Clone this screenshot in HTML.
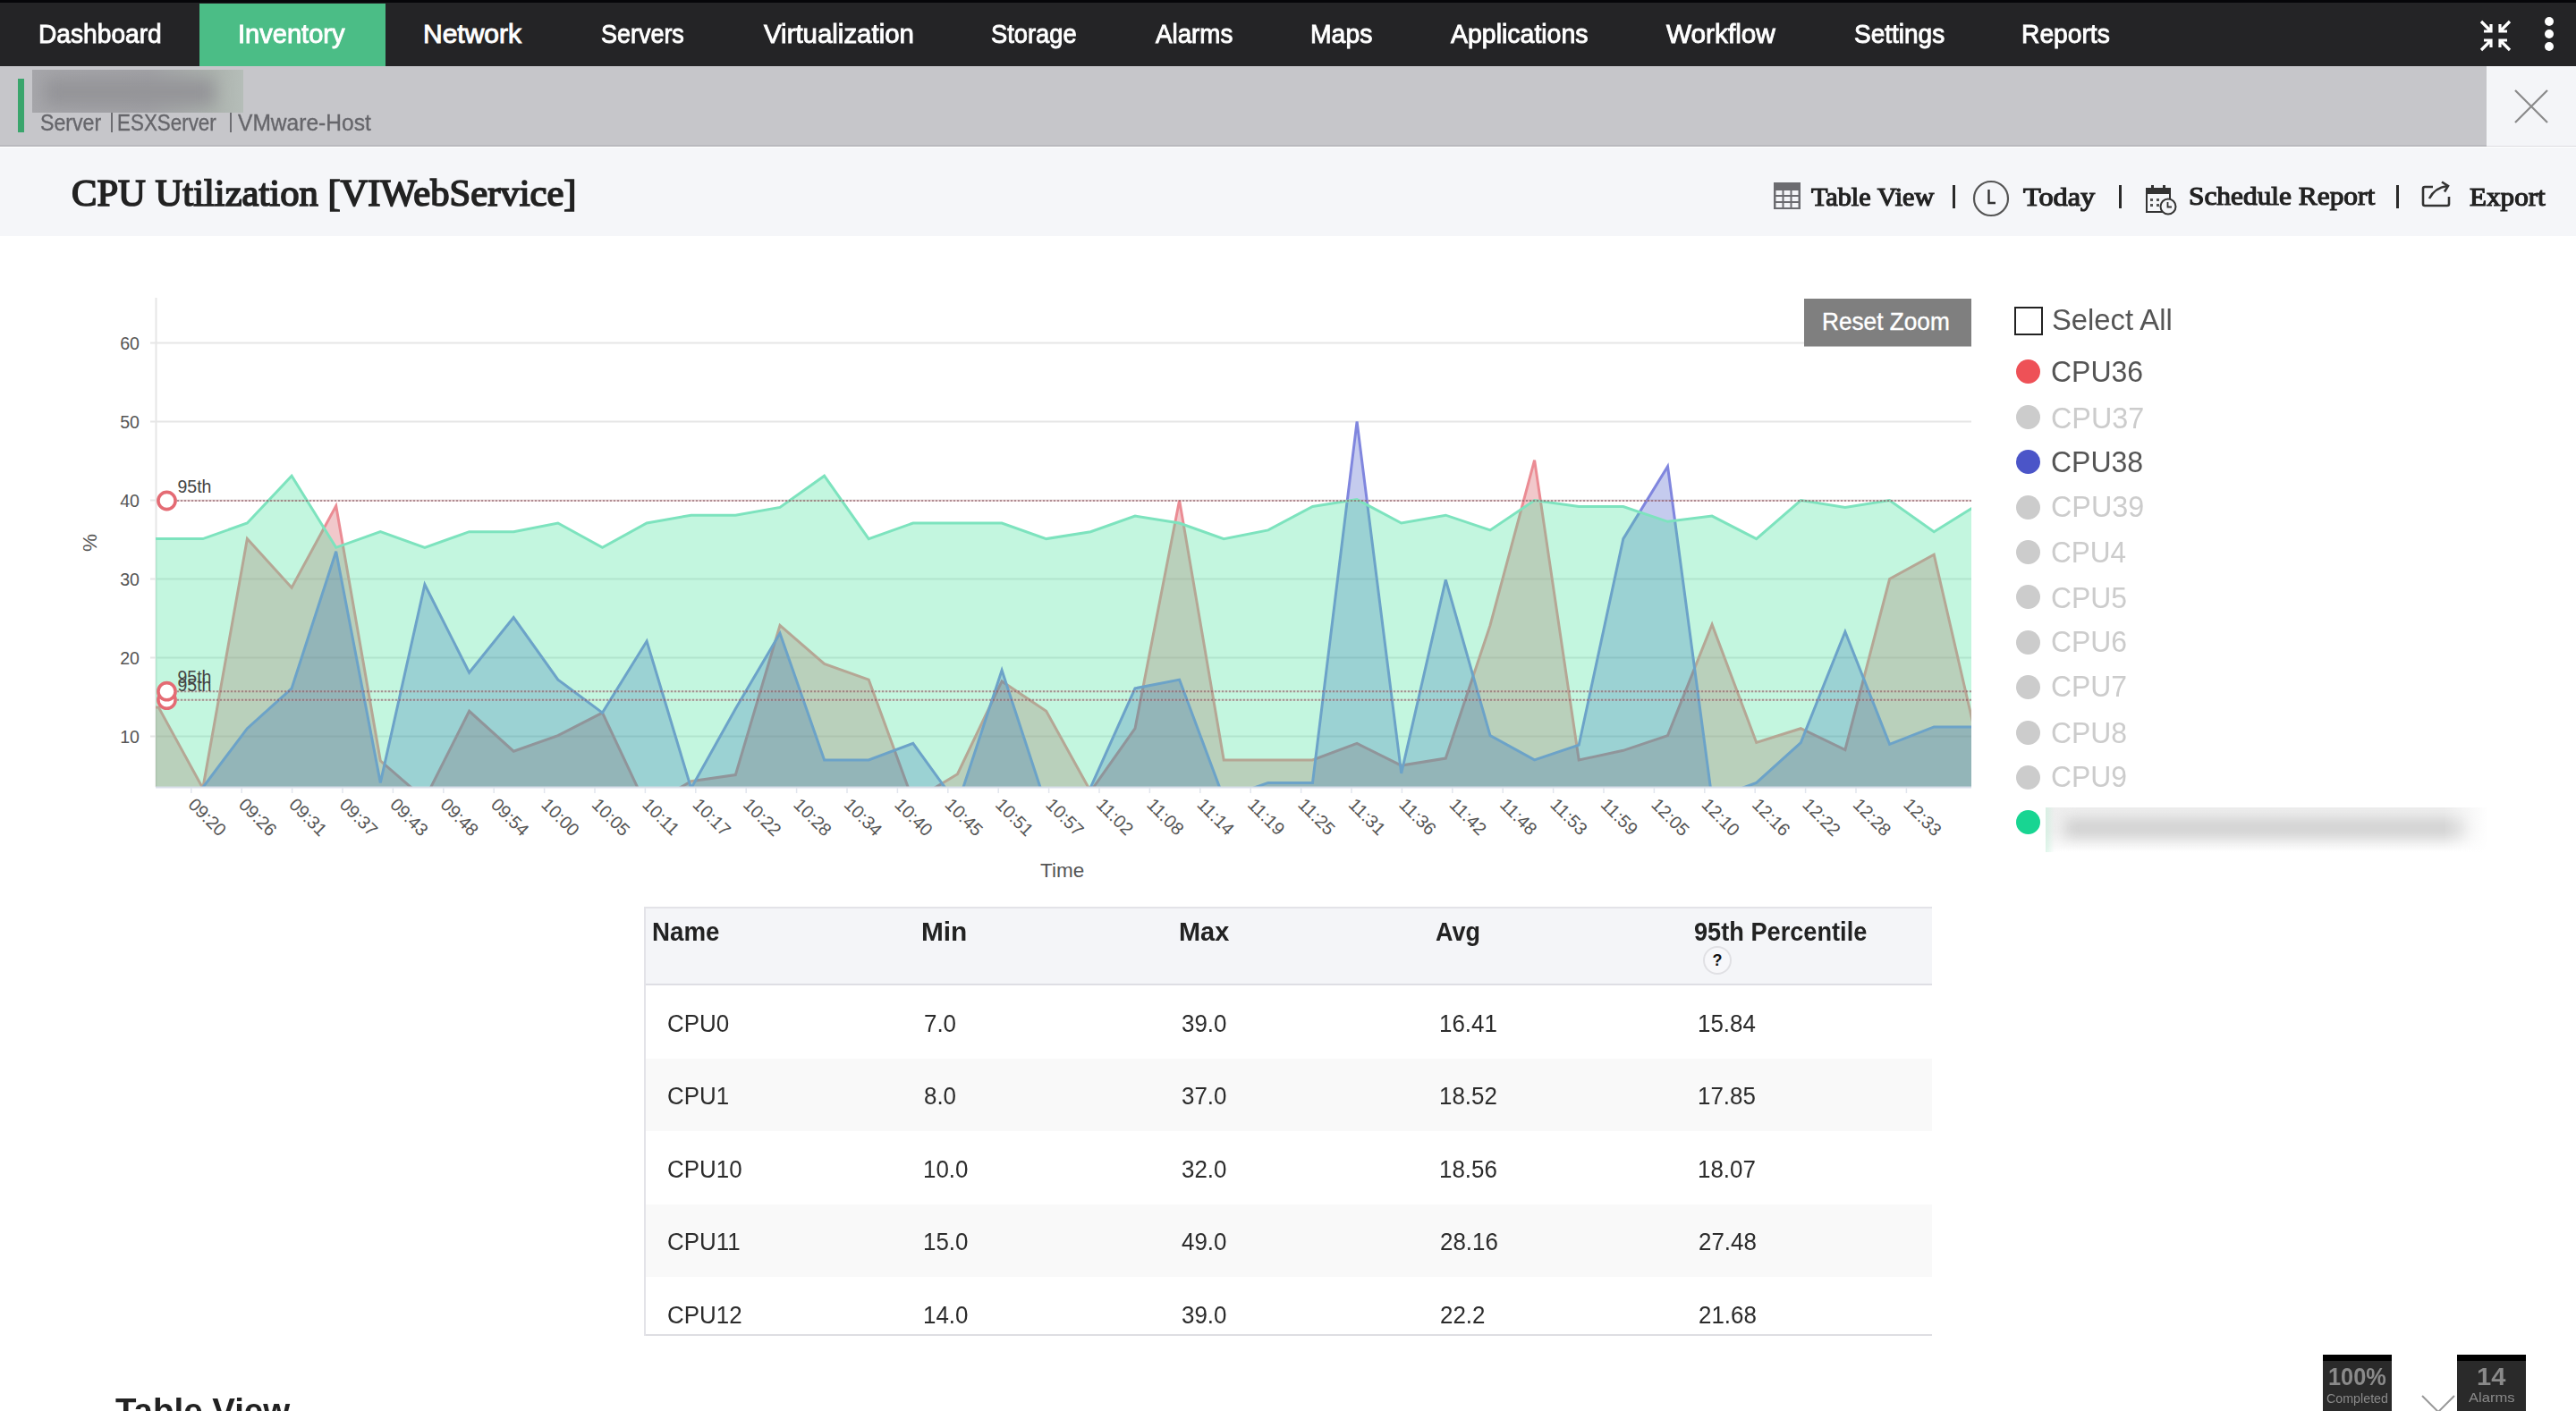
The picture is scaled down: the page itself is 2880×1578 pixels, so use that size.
<!DOCTYPE html>
<html><head><meta charset="utf-8">
<style>
html,body{margin:0;padding:0;}
body{width:2880px;height:1578px;overflow:hidden;position:relative;background:#fff;font-family:"Liberation Sans",sans-serif;}
div{box-sizing:border-box}
</style></head><body>
<div style="position:absolute;left:0;top:0;width:2880px;height:74px;background:#242426"></div>
<div style="position:absolute;left:0;top:0;width:2880px;height:3px;background:#060609"></div>
<div style="position:absolute;left:223px;top:4px;width:208px;height:70px;background:#4bbd86"></div>
<svg style="position:absolute;left:2770px;top:20px" width="40" height="40" viewBox="0 0 40 40">
<g stroke="#fff" stroke-width="3.2" fill="none">
<path d="M4 4 L15 15 M15 7 V15 H7"/><path d="M36 4 L25 15 M25 7 V15 H33"/>
<path d="M4 36 L15 25 M7 25 H15 V33"/><path d="M36 36 L25 25 M33 25 H25 V33"/>
</g></svg>
<div style="position:absolute;left:2845px;top:19px;width:10px;height:10px;border-radius:50%;background:#fff"></div>
<div style="position:absolute;left:2845px;top:33px;width:10px;height:10px;border-radius:50%;background:#fff"></div>
<div style="position:absolute;left:2845px;top:46.5px;width:10px;height:10px;border-radius:50%;background:#fff"></div>
<div style="position:absolute;left:0;top:74px;width:2780px;height:89px;background:#c6c6ca"></div>
<div style="position:absolute;left:2780px;top:74px;width:100px;height:89px;background:#f4f5f8"></div>
<div style="position:absolute;left:0;top:162px;width:2780px;height:2px;background:#b9b9be"></div><div style="position:absolute;left:2780px;top:163px;width:100px;height:1px;background:#dcdce0"></div>
<div style="position:absolute;left:20px;top:88px;width:7px;height:60px;background:#3aa56c"></div>
<div style="position:absolute;left:36px;top:78px;width:236px;height:48px;background:linear-gradient(90deg,#a6a6aa 0%,#a2a2a6 55%,#acb3ae 85%,#b5bdb8 100%);overflow:hidden">
<div style="position:absolute;left:14px;top:10px;width:190px;height:30px;background:#949498;filter:blur(9px)"></div></div>
<div style="position:absolute;left:124px;top:126px;width:2px;height:22px;background:#6d6d72"></div>
<div style="position:absolute;left:257px;top:126px;width:2px;height:22px;background:#6d6d72"></div>
<svg style="position:absolute;left:2810px;top:99px" width="40" height="40"><path d="M2 2 L38 38 M38 2 L2 38" stroke="#8a8a8a" stroke-width="2.2"/></svg>
<div style="position:absolute;left:0;top:165px;width:2880px;height:99px;background:#f5f6f9"></div>
<svg style="position:absolute;left:1983px;top:204px" width="31" height="30" viewBox="0 0 31 30">
<rect x="0" y="0" width="30" height="30" fill="#6b6b70"/><g fill="#f4f5f8">
<rect x="2.5" y="9" width="7" height="5"/><rect x="11.5" y="9" width="7" height="5"/><rect x="20.5" y="9" width="7" height="5"/>
<rect x="2.5" y="16" width="7" height="5"/><rect x="11.5" y="16" width="7" height="5"/><rect x="20.5" y="16" width="7" height="5"/>
<rect x="2.5" y="23" width="7" height="5"/><rect x="11.5" y="23" width="7" height="5"/><rect x="20.5" y="23" width="7" height="5"/></g></svg>
<div style="position:absolute;left:2183px;top:207px;width:3px;height:26px;background:#2a2a2a"></div>
<svg style="position:absolute;left:2205px;top:201px" width="42" height="42"><circle cx="21" cy="21" r="19" fill="none" stroke="#555" stroke-width="2.2"/><path d="M18.5 11 V26 H26" fill="none" stroke="#333" stroke-width="2.4"/></svg>
<div style="position:absolute;left:2369px;top:207px;width:3px;height:26px;background:#2a2a2a"></div>
<svg style="position:absolute;left:2399px;top:205px" width="36" height="36" viewBox="0 0 36 36">
<rect x="1" y="6" width="26" height="26" fill="none" stroke="#333" stroke-width="2"/><rect x="1" y="6" width="26" height="6" fill="#333"/>
<rect x="6" y="2" width="3" height="7" fill="#333"/><rect x="19" y="2" width="3" height="7" fill="#333"/>
<rect x="5" y="17" width="3" height="3" fill="#555"/><rect x="5" y="23" width="3" height="3" fill="#555"/><rect x="12" y="17" width="3" height="3" fill="#555"/><rect x="12" y="23" width="3" height="3" fill="#555"/>
<circle cx="25" cy="26" r="8.5" fill="#f4f5f8" stroke="#333" stroke-width="2"/><path d="M24.5 21 V26.5 H29" fill="none" stroke="#333" stroke-width="1.8"/></svg>
<div style="position:absolute;left:2679px;top:207px;width:3px;height:26px;background:#2a2a2a"></div>
<svg style="position:absolute;left:2706px;top:202px" width="36" height="32" viewBox="0 0 36 32">
<path d="M14 7 H5 Q3 7 3 9 V26 Q3 28 5 28 H30 Q32 28 32 26 V18" fill="none" stroke="#333" stroke-width="2.6"/>
<path d="M10 20 Q16 8 30 6" fill="none" stroke="#333" stroke-width="2.6"/><path d="M24 1.5 L31 6 L27 12.5" fill="none" stroke="#333" stroke-width="2.6"/></svg>
<svg width="2880" height="1000" style="position:absolute;left:0;top:0;font-family:'Liberation Sans',sans-serif">
<defs><clipPath id="pc"><rect x="174" y="300" width="2030" height="580"/></clipPath></defs>
<line x1="168" y1="823.5" x2="2204" y2="823.5" stroke="#e6e6e6" stroke-width="2"/>
<text x="156" y="830.5" text-anchor="end" font-size="19.6" fill="#555">10</text>
<line x1="168" y1="735.5" x2="2204" y2="735.5" stroke="#e6e6e6" stroke-width="2"/>
<text x="156" y="742.5" text-anchor="end" font-size="19.6" fill="#555">20</text>
<line x1="168" y1="647.5" x2="2204" y2="647.5" stroke="#e6e6e6" stroke-width="2"/>
<text x="156" y="654.5" text-anchor="end" font-size="19.6" fill="#555">30</text>
<line x1="168" y1="559.5" x2="2204" y2="559.5" stroke="#e6e6e6" stroke-width="2"/>
<text x="156" y="566.5" text-anchor="end" font-size="19.6" fill="#555">40</text>
<line x1="168" y1="471.5" x2="2204" y2="471.5" stroke="#e6e6e6" stroke-width="2"/>
<text x="156" y="478.5" text-anchor="end" font-size="19.6" fill="#555">50</text>
<line x1="168" y1="383.5" x2="2017" y2="383.5" stroke="#e6e6e6" stroke-width="2"/>
<text x="156" y="390.5" text-anchor="end" font-size="19.6" fill="#555">60</text>
<line x1="174.5" y1="333" x2="174.5" y2="880" stroke="#e6e6e6" stroke-width="2"/>
<g clip-path="url(#pc)">
<path d="M127.6 911.5 L127.6 790.9 L177.2 790.9 L226.8 881.6 L276.4 602.6 L326.1 657.2 L375.7 565.7 L425.3 850.8 L474.9 893.9 L524.6 795.3 L574.2 840.2 L623.8 822.6 L673.5 797.1 L723.1 902.7 L772.7 873.7 L822.3 866.6 L872.0 699.4 L921.6 742.5 L971.2 760.1 L1020.8 895.7 L1070.5 865.7 L1120.1 761.9 L1169.7 795.3 L1219.3 885.1 L1269.0 814.7 L1318.6 559.5 L1368.2 849.9 L1417.8 849.9 L1467.5 849.9 L1517.1 831.4 L1566.7 856.1 L1616.3 848.1 L1666.0 699.4 L1715.6 514.6 L1765.2 849.9 L1814.8 839.3 L1864.5 822.6 L1914.1 698.5 L1963.7 830.5 L2013.3 814.7 L2062.9 838.5 L2112.6 647.5 L2162.2 620.2 L2211.8 834.9 L2211.8 911.5 Z" fill="rgba(214,88,97,0.33)"/>
<path d="M127.6 790.9 L177.2 790.9 L226.8 881.6 L276.4 602.6 L326.1 657.2 L375.7 565.7 L425.3 850.8 L474.9 893.9 L524.6 795.3 L574.2 840.2 L623.8 822.6 L673.5 797.1 L723.1 902.7 L772.7 873.7 L822.3 866.6 L872.0 699.4 L921.6 742.5 L971.2 760.1 L1020.8 895.7 L1070.5 865.7 L1120.1 761.9 L1169.7 795.3 L1219.3 885.1 L1269.0 814.7 L1318.6 559.5 L1368.2 849.9 L1417.8 849.9 L1467.5 849.9 L1517.1 831.4 L1566.7 856.1 L1616.3 848.1 L1666.0 699.4 L1715.6 514.6 L1765.2 849.9 L1814.8 839.3 L1864.5 822.6 L1914.1 698.5 L1963.7 830.5 L2013.3 814.7 L2062.9 838.5 L2112.6 647.5 L2162.2 620.2 L2211.8 834.9" fill="none" stroke="#eb8c94" stroke-width="3"/>
<path d="M127.6 911.5 L127.6 902.7 L177.2 902.7 L226.8 880.7 L276.4 814.7 L326.1 769.8 L375.7 616.7 L425.3 875.4 L474.9 653.7 L524.6 752.2 L574.2 690.6 L623.8 760.1 L673.5 797.1 L723.1 717.0 L772.7 881.6 L822.3 792.7 L872.0 708.2 L921.6 849.9 L971.2 849.9 L1020.8 831.4 L1070.5 900.1 L1120.1 749.6 L1169.7 900.9 L1219.3 880.7 L1269.0 769.8 L1318.6 760.1 L1368.2 893.0 L1417.8 875.4 L1467.5 875.4 L1517.1 471.5 L1566.7 864.9 L1616.3 648.4 L1666.0 822.6 L1715.6 849.9 L1765.2 833.2 L1814.8 602.6 L1864.5 521.7 L1914.1 893.9 L1963.7 875.4 L2013.3 830.5 L2062.9 706.5 L2112.6 832.3 L2162.2 812.9 L2211.8 812.9 L2211.8 911.5 Z" fill="rgba(0,28,180,0.228)"/>
<path d="M127.6 902.7 L177.2 902.7 L226.8 880.7 L276.4 814.7 L326.1 769.8 L375.7 616.7 L425.3 875.4 L474.9 653.7 L524.6 752.2 L574.2 690.6 L623.8 760.1 L673.5 797.1 L723.1 717.0 L772.7 881.6 L822.3 792.7 L872.0 708.2 L921.6 849.9 L971.2 849.9 L1020.8 831.4 L1070.5 900.1 L1120.1 749.6 L1169.7 900.9 L1219.3 880.7 L1269.0 769.8 L1318.6 760.1 L1368.2 893.0 L1417.8 875.4 L1467.5 875.4 L1517.1 471.5 L1566.7 864.9 L1616.3 648.4 L1666.0 822.6 L1715.6 849.9 L1765.2 833.2 L1814.8 602.6 L1864.5 521.7 L1914.1 893.9 L1963.7 875.4 L2013.3 830.5 L2062.9 706.5 L2112.6 832.3 L2162.2 812.9 L2211.8 812.9" fill="none" stroke="#8086de" stroke-width="3"/>
<path d="M127.6 911.5 L127.6 602.6 L177.2 602.6 L226.8 602.6 L276.4 585.0 L326.1 532.2 L375.7 612.3 L425.3 594.7 L474.9 612.3 L524.6 594.7 L574.2 594.7 L623.8 585.0 L673.5 612.3 L723.1 585.0 L772.7 576.2 L822.3 576.2 L872.0 567.4 L921.6 532.2 L971.2 602.6 L1020.8 585.0 L1070.5 585.0 L1120.1 585.0 L1169.7 602.6 L1219.3 594.7 L1269.0 577.1 L1318.6 585.0 L1368.2 602.6 L1417.8 592.9 L1467.5 566.5 L1517.1 558.6 L1566.7 585.0 L1616.3 576.2 L1666.0 592.9 L1715.6 559.5 L1765.2 566.5 L1814.8 566.5 L1864.5 583.3 L1914.1 577.1 L1963.7 602.6 L2013.3 559.5 L2062.9 567.4 L2112.6 559.5 L2162.2 594.7 L2211.8 563.9 L2211.8 911.5 Z" fill="rgba(63,226,154,0.315)"/>
<path d="M127.6 602.6 L177.2 602.6 L226.8 602.6 L276.4 585.0 L326.1 532.2 L375.7 612.3 L425.3 594.7 L474.9 612.3 L524.6 594.7 L574.2 594.7 L623.8 585.0 L673.5 612.3 L723.1 585.0 L772.7 576.2 L822.3 576.2 L872.0 567.4 L921.6 532.2 L971.2 602.6 L1020.8 585.0 L1070.5 585.0 L1120.1 585.0 L1169.7 602.6 L1219.3 594.7 L1269.0 577.1 L1318.6 585.0 L1368.2 602.6 L1417.8 592.9 L1467.5 566.5 L1517.1 558.6 L1566.7 585.0 L1616.3 576.2 L1666.0 592.9 L1715.6 559.5 L1765.2 566.5 L1814.8 566.5 L1864.5 583.3 L1914.1 577.1 L1963.7 602.6 L2013.3 559.5 L2062.9 567.4 L2112.6 559.5 L2162.2 594.7 L2211.8 563.9" fill="none" stroke="#7de3be" stroke-width="3"/>
</g>
<line x1="198" y1="560.0" x2="2204" y2="560.0" stroke="rgba(235,130,140,0.25)" stroke-width="2"/>
<line x1="198" y1="560.0" x2="2204" y2="560.0" stroke="rgba(115,75,85,0.5)" stroke-width="2" stroke-dasharray="2 2"/>
<line x1="198" y1="773.2" x2="2204" y2="773.2" stroke="rgba(235,130,140,0.25)" stroke-width="2"/>
<line x1="198" y1="773.2" x2="2204" y2="773.2" stroke="rgba(115,75,85,0.5)" stroke-width="2" stroke-dasharray="2 2"/>
<line x1="198" y1="782.7" x2="2204" y2="782.7" stroke="rgba(235,130,140,0.25)" stroke-width="2"/>
<line x1="198" y1="782.7" x2="2204" y2="782.7" stroke="rgba(115,75,85,0.5)" stroke-width="2" stroke-dasharray="2 2"/>
<circle cx="186.5" cy="782.7" r="9.6" fill="#fff" stroke="#e46b74" stroke-width="3.6"/>
<text x="198.5" y="773.4" font-size="19.5" fill="#444">95th</text>
<circle cx="186.5" cy="773.2" r="9.6" fill="#fff" stroke="#e46b74" stroke-width="3.6"/>
<text x="198.5" y="763.9" font-size="19.5" fill="#444">95th</text>
<circle cx="186.5" cy="560.0" r="9.6" fill="#fff" stroke="#e46b74" stroke-width="3.6"/>
<text x="198.5" y="550.7" font-size="19.5" fill="#444">95th</text>
<line x1="174" y1="880.5" x2="2204" y2="880.5" stroke="#d8dee9" stroke-width="2"/>
<line x1="213.8" y1="881" x2="213.8" y2="887" stroke="#e2e6ee" stroke-width="1.5"/>
<text transform="translate(209.3,901) rotate(45)" font-size="20" fill="#555">09:20</text>
<line x1="270.2" y1="881" x2="270.2" y2="887" stroke="#e2e6ee" stroke-width="1.5"/>
<text transform="translate(265.7,901) rotate(45)" font-size="20" fill="#555">09:26</text>
<line x1="326.6" y1="881" x2="326.6" y2="887" stroke="#e2e6ee" stroke-width="1.5"/>
<text transform="translate(322.1,901) rotate(45)" font-size="20" fill="#555">09:31</text>
<line x1="383.0" y1="881" x2="383.0" y2="887" stroke="#e2e6ee" stroke-width="1.5"/>
<text transform="translate(378.5,901) rotate(45)" font-size="20" fill="#555">09:37</text>
<line x1="439.4" y1="881" x2="439.4" y2="887" stroke="#e2e6ee" stroke-width="1.5"/>
<text transform="translate(434.9,901) rotate(45)" font-size="20" fill="#555">09:43</text>
<line x1="495.8" y1="881" x2="495.8" y2="887" stroke="#e2e6ee" stroke-width="1.5"/>
<text transform="translate(491.3,901) rotate(45)" font-size="20" fill="#555">09:48</text>
<line x1="552.2" y1="881" x2="552.2" y2="887" stroke="#e2e6ee" stroke-width="1.5"/>
<text transform="translate(547.7,901) rotate(45)" font-size="20" fill="#555">09:54</text>
<line x1="608.6" y1="881" x2="608.6" y2="887" stroke="#e2e6ee" stroke-width="1.5"/>
<text transform="translate(604.1,901) rotate(45)" font-size="20" fill="#555">10:00</text>
<line x1="665.0" y1="881" x2="665.0" y2="887" stroke="#e2e6ee" stroke-width="1.5"/>
<text transform="translate(660.5,901) rotate(45)" font-size="20" fill="#555">10:05</text>
<line x1="721.4" y1="881" x2="721.4" y2="887" stroke="#e2e6ee" stroke-width="1.5"/>
<text transform="translate(716.9,901) rotate(45)" font-size="20" fill="#555">10:11</text>
<line x1="777.8" y1="881" x2="777.8" y2="887" stroke="#e2e6ee" stroke-width="1.5"/>
<text transform="translate(773.3,901) rotate(45)" font-size="20" fill="#555">10:17</text>
<line x1="834.2" y1="881" x2="834.2" y2="887" stroke="#e2e6ee" stroke-width="1.5"/>
<text transform="translate(829.7,901) rotate(45)" font-size="20" fill="#555">10:22</text>
<line x1="890.6" y1="881" x2="890.6" y2="887" stroke="#e2e6ee" stroke-width="1.5"/>
<text transform="translate(886.1,901) rotate(45)" font-size="20" fill="#555">10:28</text>
<line x1="947.0" y1="881" x2="947.0" y2="887" stroke="#e2e6ee" stroke-width="1.5"/>
<text transform="translate(942.5,901) rotate(45)" font-size="20" fill="#555">10:34</text>
<line x1="1003.4" y1="881" x2="1003.4" y2="887" stroke="#e2e6ee" stroke-width="1.5"/>
<text transform="translate(998.9,901) rotate(45)" font-size="20" fill="#555">10:40</text>
<line x1="1059.8" y1="881" x2="1059.8" y2="887" stroke="#e2e6ee" stroke-width="1.5"/>
<text transform="translate(1055.3,901) rotate(45)" font-size="20" fill="#555">10:45</text>
<line x1="1116.2" y1="881" x2="1116.2" y2="887" stroke="#e2e6ee" stroke-width="1.5"/>
<text transform="translate(1111.7,901) rotate(45)" font-size="20" fill="#555">10:51</text>
<line x1="1172.6" y1="881" x2="1172.6" y2="887" stroke="#e2e6ee" stroke-width="1.5"/>
<text transform="translate(1168.1,901) rotate(45)" font-size="20" fill="#555">10:57</text>
<line x1="1229.0" y1="881" x2="1229.0" y2="887" stroke="#e2e6ee" stroke-width="1.5"/>
<text transform="translate(1224.5,901) rotate(45)" font-size="20" fill="#555">11:02</text>
<line x1="1285.4" y1="881" x2="1285.4" y2="887" stroke="#e2e6ee" stroke-width="1.5"/>
<text transform="translate(1280.9,901) rotate(45)" font-size="20" fill="#555">11:08</text>
<line x1="1341.8" y1="881" x2="1341.8" y2="887" stroke="#e2e6ee" stroke-width="1.5"/>
<text transform="translate(1337.3,901) rotate(45)" font-size="20" fill="#555">11:14</text>
<line x1="1398.2" y1="881" x2="1398.2" y2="887" stroke="#e2e6ee" stroke-width="1.5"/>
<text transform="translate(1393.7,901) rotate(45)" font-size="20" fill="#555">11:19</text>
<line x1="1454.6" y1="881" x2="1454.6" y2="887" stroke="#e2e6ee" stroke-width="1.5"/>
<text transform="translate(1450.1,901) rotate(45)" font-size="20" fill="#555">11:25</text>
<line x1="1511.0" y1="881" x2="1511.0" y2="887" stroke="#e2e6ee" stroke-width="1.5"/>
<text transform="translate(1506.5,901) rotate(45)" font-size="20" fill="#555">11:31</text>
<line x1="1567.4" y1="881" x2="1567.4" y2="887" stroke="#e2e6ee" stroke-width="1.5"/>
<text transform="translate(1562.9,901) rotate(45)" font-size="20" fill="#555">11:36</text>
<line x1="1623.8" y1="881" x2="1623.8" y2="887" stroke="#e2e6ee" stroke-width="1.5"/>
<text transform="translate(1619.3,901) rotate(45)" font-size="20" fill="#555">11:42</text>
<line x1="1680.2" y1="881" x2="1680.2" y2="887" stroke="#e2e6ee" stroke-width="1.5"/>
<text transform="translate(1675.7,901) rotate(45)" font-size="20" fill="#555">11:48</text>
<line x1="1736.6" y1="881" x2="1736.6" y2="887" stroke="#e2e6ee" stroke-width="1.5"/>
<text transform="translate(1732.1,901) rotate(45)" font-size="20" fill="#555">11:53</text>
<line x1="1793.0" y1="881" x2="1793.0" y2="887" stroke="#e2e6ee" stroke-width="1.5"/>
<text transform="translate(1788.5,901) rotate(45)" font-size="20" fill="#555">11:59</text>
<line x1="1849.4" y1="881" x2="1849.4" y2="887" stroke="#e2e6ee" stroke-width="1.5"/>
<text transform="translate(1844.9,901) rotate(45)" font-size="20" fill="#555">12:05</text>
<line x1="1905.8" y1="881" x2="1905.8" y2="887" stroke="#e2e6ee" stroke-width="1.5"/>
<text transform="translate(1901.3,901) rotate(45)" font-size="20" fill="#555">12:10</text>
<line x1="1962.2" y1="881" x2="1962.2" y2="887" stroke="#e2e6ee" stroke-width="1.5"/>
<text transform="translate(1957.7,901) rotate(45)" font-size="20" fill="#555">12:16</text>
<line x1="2018.6" y1="881" x2="2018.6" y2="887" stroke="#e2e6ee" stroke-width="1.5"/>
<text transform="translate(2014.1,901) rotate(45)" font-size="20" fill="#555">12:22</text>
<line x1="2075.0" y1="881" x2="2075.0" y2="887" stroke="#e2e6ee" stroke-width="1.5"/>
<text transform="translate(2070.5,901) rotate(45)" font-size="20" fill="#555">12:28</text>
<line x1="2131.4" y1="881" x2="2131.4" y2="887" stroke="#e2e6ee" stroke-width="1.5"/>
<text transform="translate(2126.9,901) rotate(45)" font-size="20" fill="#555">12:33</text>
<text x="1163" y="981" font-size="22.5" fill="#555">Time</text>
<text transform="translate(107.5,617) rotate(-90)" font-size="22.5" fill="#555">%</text>
<rect x="2017" y="334" width="187" height="53.5" fill="#7f7f7f"/>
<text x="2037" y="369.3" font-size="28.5" fill="#fff" stroke="#fff" stroke-width="0.4" transform="translate(2037,0) scale(0.92,1) translate(-2037,0)">Reset Zoom</text>
</svg>
<div style="position:absolute;left:2252px;top:343px;width:32px;height:32px;border:2px solid #222;background:#fff"></div>
<div style="position:absolute;left:2254.3px;top:402.3px;width:27px;height:27px;border-radius:50%;background:#ee5157"></div><div style="position:absolute;left:2254.3px;top:452.7px;width:27px;height:27px;border-radius:50%;background:#cccccc"></div><div style="position:absolute;left:2254.3px;top:503.1px;width:27px;height:27px;border-radius:50%;background:#4b55c8"></div><div style="position:absolute;left:2254.3px;top:553.5px;width:27px;height:27px;border-radius:50%;background:#cccccc"></div><div style="position:absolute;left:2254.3px;top:603.9px;width:27px;height:27px;border-radius:50%;background:#cccccc"></div><div style="position:absolute;left:2254.3px;top:654.3px;width:27px;height:27px;border-radius:50%;background:#cccccc"></div><div style="position:absolute;left:2254.3px;top:704.7px;width:27px;height:27px;border-radius:50%;background:#cccccc"></div><div style="position:absolute;left:2254.3px;top:755.1px;width:27px;height:27px;border-radius:50%;background:#cccccc"></div><div style="position:absolute;left:2254.3px;top:805.5px;width:27px;height:27px;border-radius:50%;background:#cccccc"></div><div style="position:absolute;left:2254.3px;top:855.9px;width:27px;height:27px;border-radius:50%;background:#cccccc"></div><div style="position:absolute;left:2254.3px;top:906.3px;width:27px;height:27px;border-radius:50%;background:#18d592"></div><div style="position:absolute;left:2287px;top:903px;width:495px;height:50px;overflow:hidden;background:linear-gradient(180deg,#eeeeee 0%,#efefef 55%,#f8f8f8 85%,#ffffff 100%)"><div style="position:absolute;left:22px;top:12px;width:450px;height:22px;background:#d2d2d2;filter:blur(7px)"></div><div style="position:absolute;left:0;top:0;width:10px;height:50px;background:linear-gradient(90deg,rgba(200,240,220,0.6),rgba(255,255,255,0))"></div><div style="position:absolute;right:0;top:0;width:50px;height:50px;background:linear-gradient(90deg,rgba(255,255,255,0),#fff)"></div></div>
<div style="position:absolute;left:720px;top:1015px;width:1440px;height:85px;background:#f4f5f8"></div>
<div style="position:absolute;left:722px;top:1102.0px;width:1438px;height:81.5px;background:#ffffff"></div><div style="position:absolute;left:722px;top:1183.5px;width:1438px;height:81.5px;background:#f9f9f9"></div><div style="position:absolute;left:722px;top:1265.0px;width:1438px;height:81.5px;background:#ffffff"></div><div style="position:absolute;left:722px;top:1346.5px;width:1438px;height:81.5px;background:#f9f9f9"></div><div style="position:absolute;left:722px;top:1428.0px;width:1438px;height:64.0px;background:#ffffff"></div>
<div style="position:absolute;left:720px;top:1100px;width:1440px;height:2px;background:#dedee4"></div>
<div style="position:absolute;left:720px;top:1492px;width:1440px;height:2px;background:#dedee2"></div>
<div style="position:absolute;left:720px;top:1015px;width:2px;height:479px;background:#e3e3e8"></div>
<div style="position:absolute;left:720px;top:1014px;width:1440px;height:2px;background:#e3e3e8"></div>
<div style="position:absolute;left:1904px;top:1058px;width:32px;height:32px;border:2px solid #e0e0e4;border-radius:50%;background:#f7f7fa;font-size:18px;line-height:28px;text-align:center;font-weight:bold;color:#111">?</div>
<div style="position:absolute;left:2597px;top:1515px;width:77px;height:63px;background:#2a2a2a;border-top:7px solid #000"></div>
<div style="position:absolute;left:2747px;top:1515px;width:77px;height:63px;background:#2a2a2a;border-top:7px solid #000"></div>
<svg style="position:absolute;left:2705px;top:1558px" width="42" height="22"><path d="M3 3 L21 21 L39 3" fill="none" stroke="#999" stroke-width="2"/></svg>
<div style="position:absolute;left:42.82px;top:23.30px;line-height:1;white-space:nowrap;font-family:'Liberation Sans',sans-serif;font-size:30px;font-weight:normal;color:#ffffff;-webkit-text-stroke:0.95px #ffffff;transform-origin:0 0;transform:scaleX(0.9385);">Dashboard</div>
<div style="position:absolute;left:266.36px;top:23.30px;line-height:1;white-space:nowrap;font-family:'Liberation Sans',sans-serif;font-size:30px;font-weight:normal;color:#ffffff;-webkit-text-stroke:0.95px #ffffff;transform-origin:0 0;transform:scaleX(0.9689);">Inventory</div>
<div style="position:absolute;left:473.00px;top:23.30px;line-height:1;white-space:nowrap;font-family:'Liberation Sans',sans-serif;font-size:30px;font-weight:normal;color:#ffffff;-webkit-text-stroke:0.95px #ffffff;">Network</div>
<div style="position:absolute;left:671.70px;top:23.30px;line-height:1;white-space:nowrap;font-family:'Liberation Sans',sans-serif;font-size:30px;font-weight:normal;color:#ffffff;-webkit-text-stroke:0.95px #ffffff;transform-origin:0 0;transform:scaleX(0.8980);">Servers</div>
<div style="position:absolute;left:853.70px;top:23.30px;line-height:1;white-space:nowrap;font-family:'Liberation Sans',sans-serif;font-size:30px;font-weight:normal;color:#ffffff;-webkit-text-stroke:0.95px #ffffff;transform-origin:0 0;transform:scaleX(0.9806);">Virtualization</div>
<div style="position:absolute;left:1108.09px;top:23.30px;line-height:1;white-space:nowrap;font-family:'Liberation Sans',sans-serif;font-size:30px;font-weight:normal;color:#ffffff;-webkit-text-stroke:0.95px #ffffff;transform-origin:0 0;transform:scaleX(0.9106);">Storage</div>
<div style="position:absolute;left:1291.60px;top:23.30px;line-height:1;white-space:nowrap;font-family:'Liberation Sans',sans-serif;font-size:30px;font-weight:normal;color:#ffffff;-webkit-text-stroke:0.95px #ffffff;transform-origin:0 0;transform:scaleX(0.9247);">Alarms</div>
<div style="position:absolute;left:1464.91px;top:22.80px;line-height:1;white-space:nowrap;font-family:'Liberation Sans',sans-serif;font-size:30px;font-weight:normal;color:#ffffff;-webkit-text-stroke:0.95px #ffffff;transform-origin:0 0;transform:scaleX(0.9451);">Maps</div>
<div style="position:absolute;left:1621.90px;top:22.80px;line-height:1;white-space:nowrap;font-family:'Liberation Sans',sans-serif;font-size:30px;font-weight:normal;color:#ffffff;-webkit-text-stroke:0.95px #ffffff;transform-origin:0 0;transform:scaleX(0.9491);">Applications</div>
<div style="position:absolute;left:1863.00px;top:22.80px;line-height:1;white-space:nowrap;font-family:'Liberation Sans',sans-serif;font-size:30px;font-weight:normal;color:#ffffff;-webkit-text-stroke:0.95px #ffffff;transform-origin:0 0;transform:scaleX(0.9919);">Workflow</div>
<div style="position:absolute;left:2072.67px;top:22.80px;line-height:1;white-space:nowrap;font-family:'Liberation Sans',sans-serif;font-size:30px;font-weight:normal;color:#ffffff;-webkit-text-stroke:0.95px #ffffff;transform-origin:0 0;transform:scaleX(0.9336);">Settings</div>
<div style="position:absolute;left:2259.92px;top:22.80px;line-height:1;white-space:nowrap;font-family:'Liberation Sans',sans-serif;font-size:30px;font-weight:normal;color:#ffffff;-webkit-text-stroke:0.95px #ffffff;transform-origin:0 0;transform:scaleX(0.9408);">Reports</div>
<div style="position:absolute;left:45.18px;top:125.00px;line-height:1;white-space:nowrap;font-family:'Liberation Sans',sans-serif;font-size:25px;font-weight:normal;color:#66666b;-webkit-text-stroke:0.35px #66666b;transform-origin:0 0;transform:scaleX(0.9247);">Server</div>
<div style="position:absolute;left:131.41px;top:125.00px;line-height:1;white-space:nowrap;font-family:'Liberation Sans',sans-serif;font-size:25px;font-weight:normal;color:#66666b;-webkit-text-stroke:0.35px #66666b;transform-origin:0 0;transform:scaleX(0.8959);">ESXServer</div>
<div style="position:absolute;left:265.60px;top:125.00px;line-height:1;white-space:nowrap;font-family:'Liberation Sans',sans-serif;font-size:25px;font-weight:normal;color:#66666b;-webkit-text-stroke:0.35px #66666b;transform-origin:0 0;transform:scaleX(0.9829);">VMware-Host</div>
<div style="position:absolute;left:79.51px;top:194.40px;line-height:1;white-space:nowrap;font-family:'Liberation Serif',serif;font-size:43px;font-weight:normal;color:#222222;-webkit-text-stroke:1.7px #222222;transform-origin:0 0;transform:scaleX(0.9908);">CPU Utilization [VIWebService]</div>
<div style="position:absolute;left:2025.20px;top:205.50px;line-height:1;white-space:nowrap;font-family:'Liberation Serif',serif;font-size:29px;font-weight:normal;color:#222222;-webkit-text-stroke:1.2px #222222;transform-origin:0 0;transform:scaleX(1.0417);">Table View</div>
<div style="position:absolute;left:2261.80px;top:205.50px;line-height:1;white-space:nowrap;font-family:'Liberation Serif',serif;font-size:29px;font-weight:normal;color:#222222;-webkit-text-stroke:1.2px #222222;transform-origin:0 0;transform:scaleX(1.1123);">Today</div>
<div style="position:absolute;left:2446.72px;top:205.30px;line-height:1;white-space:nowrap;font-family:'Liberation Serif',serif;font-size:29px;font-weight:normal;color:#222222;-webkit-text-stroke:1.2px #222222;transform-origin:0 0;transform:scaleX(1.0818);">Schedule Report</div>
<div style="position:absolute;left:2760.80px;top:206.20px;line-height:1;white-space:nowrap;font-family:'Liberation Serif',serif;font-size:29px;font-weight:normal;color:#222222;-webkit-text-stroke:1.2px #222222;transform-origin:0 0;transform:scaleX(1.0734);">Export</div>
<div style="position:absolute;left:2293.54px;top:340.50px;line-height:1;white-space:nowrap;font-family:'Liberation Sans',sans-serif;font-size:33.5px;font-weight:normal;color:#555555;transform-origin:0 0;transform:scaleX(0.9776);">Select All</div>
<div style="position:absolute;left:2292.79px;top:399.00px;line-height:1;white-space:nowrap;font-family:'Liberation Sans',sans-serif;font-size:33.5px;font-weight:normal;color:#555555;transform-origin:0 0;transform:scaleX(0.9552);">CPU36</div>
<div style="position:absolute;left:2292.77px;top:450.60px;line-height:1;white-space:nowrap;font-family:'Liberation Sans',sans-serif;font-size:33.5px;font-weight:normal;color:#cccccc;transform-origin:0 0;transform:scaleX(0.9644);">CPU37</div>
<div style="position:absolute;left:2292.79px;top:500.30px;line-height:1;white-space:nowrap;font-family:'Liberation Sans',sans-serif;font-size:33.5px;font-weight:normal;color:#555555;transform-origin:0 0;transform:scaleX(0.9552);">CPU38</div>
<div style="position:absolute;left:2292.77px;top:550.00px;line-height:1;white-space:nowrap;font-family:'Liberation Sans',sans-serif;font-size:33.5px;font-weight:normal;color:#cccccc;transform-origin:0 0;transform:scaleX(0.9644);">CPU39</div>
<div style="position:absolute;left:2292.82px;top:600.60px;line-height:1;white-space:nowrap;font-family:'Liberation Sans',sans-serif;font-size:33.5px;font-weight:normal;color:#cccccc;transform-origin:0 0;transform:scaleX(0.9414);">CPU4</div>
<div style="position:absolute;left:2292.80px;top:651.50px;line-height:1;white-space:nowrap;font-family:'Liberation Sans',sans-serif;font-size:33.5px;font-weight:normal;color:#cccccc;transform-origin:0 0;transform:scaleX(0.9523);">CPU5</div>
<div style="position:absolute;left:2292.80px;top:701.30px;line-height:1;white-space:nowrap;font-family:'Liberation Sans',sans-serif;font-size:33.5px;font-weight:normal;color:#cccccc;transform-origin:0 0;transform:scaleX(0.9523);">CPU6</div>
<div style="position:absolute;left:2292.80px;top:751.00px;line-height:1;white-space:nowrap;font-family:'Liberation Sans',sans-serif;font-size:33.5px;font-weight:normal;color:#cccccc;transform-origin:0 0;transform:scaleX(0.9523);">CPU7</div>
<div style="position:absolute;left:2292.80px;top:802.60px;line-height:1;white-space:nowrap;font-family:'Liberation Sans',sans-serif;font-size:33.5px;font-weight:normal;color:#cccccc;transform-origin:0 0;transform:scaleX(0.9523);">CPU8</div>
<div style="position:absolute;left:2292.80px;top:852.40px;line-height:1;white-space:nowrap;font-family:'Liberation Sans',sans-serif;font-size:33.5px;font-weight:normal;color:#cccccc;transform-origin:0 0;transform:scaleX(0.9523);">CPU9</div>
<div style="position:absolute;left:728.72px;top:1026.70px;line-height:1;white-space:nowrap;font-family:'Liberation Sans',sans-serif;font-size:29.5px;font-weight:bold;color:#222222;transform-origin:0 0;transform:scaleX(0.9385);">Name</div>
<div style="position:absolute;left:1029.58px;top:1026.70px;line-height:1;white-space:nowrap;font-family:'Liberation Sans',sans-serif;font-size:29.5px;font-weight:bold;color:#222222;transform-origin:0 0;transform:scaleX(1.0106);">Min</div>
<div style="position:absolute;left:1317.54px;top:1026.70px;line-height:1;white-space:nowrap;font-family:'Liberation Sans',sans-serif;font-size:29.5px;font-weight:bold;color:#222222;transform-origin:0 0;transform:scaleX(0.9800);">Max</div>
<div style="position:absolute;left:1605.09px;top:1026.70px;line-height:1;white-space:nowrap;font-family:'Liberation Sans',sans-serif;font-size:29.5px;font-weight:bold;color:#222222;transform-origin:0 0;transform:scaleX(0.9135);">Avg</div>
<div style="position:absolute;left:1894.48px;top:1026.70px;line-height:1;white-space:nowrap;font-family:'Liberation Sans',sans-serif;font-size:29.5px;font-weight:bold;color:#222222;transform-origin:0 0;transform:scaleX(0.9212);">95th Percentile</div>
<div style="position:absolute;left:745.64px;top:1131.50px;line-height:1;white-space:nowrap;font-family:'Liberation Sans',sans-serif;font-size:27px;font-weight:normal;color:#2b2b2b;transform-origin:0 0;transform:scaleX(0.9600);">CPU0</div>
<div style="position:absolute;left:1033.44px;top:1131.50px;line-height:1;white-space:nowrap;font-family:'Liberation Sans',sans-serif;font-size:27px;font-weight:normal;color:#2b2b2b;transform-origin:0 0;transform:scaleX(0.9600);">7.0</div>
<div style="position:absolute;left:1321.34px;top:1131.50px;line-height:1;white-space:nowrap;font-family:'Liberation Sans',sans-serif;font-size:27px;font-weight:normal;color:#2b2b2b;transform-origin:0 0;transform:scaleX(0.9600);">39.0</div>
<div style="position:absolute;left:1609.48px;top:1131.50px;line-height:1;white-space:nowrap;font-family:'Liberation Sans',sans-serif;font-size:27px;font-weight:normal;color:#2b2b2b;transform-origin:0 0;transform:scaleX(0.9600);">16.41</div>
<div style="position:absolute;left:1897.58px;top:1131.50px;line-height:1;white-space:nowrap;font-family:'Liberation Sans',sans-serif;font-size:27px;font-weight:normal;color:#2b2b2b;transform-origin:0 0;transform:scaleX(0.9600);">15.84</div>
<div style="position:absolute;left:745.64px;top:1213.00px;line-height:1;white-space:nowrap;font-family:'Liberation Sans',sans-serif;font-size:27px;font-weight:normal;color:#2b2b2b;transform-origin:0 0;transform:scaleX(0.9600);">CPU1</div>
<div style="position:absolute;left:1033.44px;top:1213.00px;line-height:1;white-space:nowrap;font-family:'Liberation Sans',sans-serif;font-size:27px;font-weight:normal;color:#2b2b2b;transform-origin:0 0;transform:scaleX(0.9600);">8.0</div>
<div style="position:absolute;left:1321.34px;top:1213.00px;line-height:1;white-space:nowrap;font-family:'Liberation Sans',sans-serif;font-size:27px;font-weight:normal;color:#2b2b2b;transform-origin:0 0;transform:scaleX(0.9600);">37.0</div>
<div style="position:absolute;left:1609.48px;top:1213.00px;line-height:1;white-space:nowrap;font-family:'Liberation Sans',sans-serif;font-size:27px;font-weight:normal;color:#2b2b2b;transform-origin:0 0;transform:scaleX(0.9600);">18.52</div>
<div style="position:absolute;left:1897.58px;top:1213.00px;line-height:1;white-space:nowrap;font-family:'Liberation Sans',sans-serif;font-size:27px;font-weight:normal;color:#2b2b2b;transform-origin:0 0;transform:scaleX(0.9600);">17.85</div>
<div style="position:absolute;left:745.64px;top:1294.50px;line-height:1;white-space:nowrap;font-family:'Liberation Sans',sans-serif;font-size:27px;font-weight:normal;color:#2b2b2b;transform-origin:0 0;transform:scaleX(0.9600);">CPU10</div>
<div style="position:absolute;left:1032.48px;top:1294.50px;line-height:1;white-space:nowrap;font-family:'Liberation Sans',sans-serif;font-size:27px;font-weight:normal;color:#2b2b2b;transform-origin:0 0;transform:scaleX(0.9600);">10.0</div>
<div style="position:absolute;left:1321.34px;top:1294.50px;line-height:1;white-space:nowrap;font-family:'Liberation Sans',sans-serif;font-size:27px;font-weight:normal;color:#2b2b2b;transform-origin:0 0;transform:scaleX(0.9600);">32.0</div>
<div style="position:absolute;left:1609.48px;top:1294.50px;line-height:1;white-space:nowrap;font-family:'Liberation Sans',sans-serif;font-size:27px;font-weight:normal;color:#2b2b2b;transform-origin:0 0;transform:scaleX(0.9600);">18.56</div>
<div style="position:absolute;left:1897.58px;top:1294.50px;line-height:1;white-space:nowrap;font-family:'Liberation Sans',sans-serif;font-size:27px;font-weight:normal;color:#2b2b2b;transform-origin:0 0;transform:scaleX(0.9600);">18.07</div>
<div style="position:absolute;left:745.64px;top:1376.00px;line-height:1;white-space:nowrap;font-family:'Liberation Sans',sans-serif;font-size:27px;font-weight:normal;color:#2b2b2b;transform-origin:0 0;transform:scaleX(0.9600);">CPU11</div>
<div style="position:absolute;left:1032.48px;top:1376.00px;line-height:1;white-space:nowrap;font-family:'Liberation Sans',sans-serif;font-size:27px;font-weight:normal;color:#2b2b2b;transform-origin:0 0;transform:scaleX(0.9600);">15.0</div>
<div style="position:absolute;left:1321.34px;top:1376.00px;line-height:1;white-space:nowrap;font-family:'Liberation Sans',sans-serif;font-size:27px;font-weight:normal;color:#2b2b2b;transform-origin:0 0;transform:scaleX(0.9600);">49.0</div>
<div style="position:absolute;left:1610.44px;top:1376.00px;line-height:1;white-space:nowrap;font-family:'Liberation Sans',sans-serif;font-size:27px;font-weight:normal;color:#2b2b2b;transform-origin:0 0;transform:scaleX(0.9600);">28.16</div>
<div style="position:absolute;left:1898.54px;top:1376.00px;line-height:1;white-space:nowrap;font-family:'Liberation Sans',sans-serif;font-size:27px;font-weight:normal;color:#2b2b2b;transform-origin:0 0;transform:scaleX(0.9600);">27.48</div>
<div style="position:absolute;left:745.64px;top:1457.50px;line-height:1;white-space:nowrap;font-family:'Liberation Sans',sans-serif;font-size:27px;font-weight:normal;color:#2b2b2b;transform-origin:0 0;transform:scaleX(0.9600);">CPU12</div>
<div style="position:absolute;left:1032.48px;top:1457.50px;line-height:1;white-space:nowrap;font-family:'Liberation Sans',sans-serif;font-size:27px;font-weight:normal;color:#2b2b2b;transform-origin:0 0;transform:scaleX(0.9600);">14.0</div>
<div style="position:absolute;left:1321.34px;top:1457.50px;line-height:1;white-space:nowrap;font-family:'Liberation Sans',sans-serif;font-size:27px;font-weight:normal;color:#2b2b2b;transform-origin:0 0;transform:scaleX(0.9600);">39.0</div>
<div style="position:absolute;left:1610.44px;top:1457.50px;line-height:1;white-space:nowrap;font-family:'Liberation Sans',sans-serif;font-size:27px;font-weight:normal;color:#2b2b2b;transform-origin:0 0;transform:scaleX(0.9600);">22.2</div>
<div style="position:absolute;left:1898.54px;top:1457.50px;line-height:1;white-space:nowrap;font-family:'Liberation Sans',sans-serif;font-size:27px;font-weight:normal;color:#2b2b2b;transform-origin:0 0;transform:scaleX(0.9600);">21.68</div>
<div style="position:absolute;left:129.00px;top:1559.30px;line-height:1;white-space:nowrap;font-family:'Liberation Sans',sans-serif;font-size:38px;font-weight:bold;color:#222222;transform-origin:0 0;transform:scaleX(1.0114);">Table View</div>
<div style="position:absolute;left:2602.86px;top:1526.00px;line-height:1;white-space:nowrap;font-family:'Liberation Sans',sans-serif;font-size:27.5px;font-weight:bold;color:#8a8a8a;transform-origin:0 0;transform:scaleX(0.9221);">100%</div>
<div style="position:absolute;left:2600.85px;top:1555.70px;line-height:1;white-space:nowrap;font-family:'Liberation Sans',sans-serif;font-size:15px;font-weight:normal;color:#8a8a8a;transform-origin:0 0;transform:scaleX(0.9507);">Completed</div>
<div style="position:absolute;left:2768.88px;top:1526.00px;line-height:1;white-space:nowrap;font-family:'Liberation Sans',sans-serif;font-size:27.5px;font-weight:bold;color:#8a8a8a;transform-origin:0 0;transform:scaleX(1.0586);">14</div>
<div style="position:absolute;left:2760.40px;top:1555.00px;line-height:1;white-space:nowrap;font-family:'Liberation Sans',sans-serif;font-size:15px;font-weight:normal;color:#8a8a8a;transform-origin:0 0;transform:scaleX(1.1065);">Alarms</div>
</body></html>
